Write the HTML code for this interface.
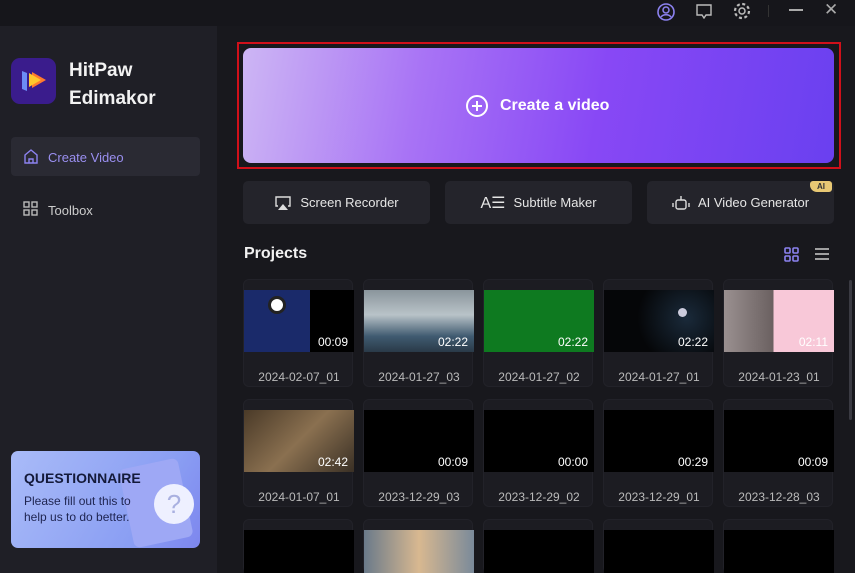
<!DOCTYPE html>
<html style="width:855px;height:573px;overflow:hidden"><head><style>
*{margin:0;padding:0;box-sizing:border-box}
body{width:855px;height:573px;overflow:hidden;background:#18181d;font-family:"Liberation Sans",sans-serif;position:relative;color:#ddd}
.abs{position:absolute}
.top{left:0;top:0;width:855px;height:26px;background:#16161b}
.side{left:0;top:26px;width:217px;height:547px;background:#1f1f26}
.tool{top:181px;height:43px;width:187px;background:#24242b;border-radius:5px;font-size:13px;color:#e6e6e6;display:flex;align-items:center;justify-content:center;gap:8px}
.card{width:110px;height:108px;background:#1c1c22;border-radius:6px;border:1px solid #222229}
.thumb{position:absolute;left:0;top:10px;width:110px;height:62px;background:#000;overflow:hidden}
.dur{position:absolute;right:6px;bottom:3px;font-size:12px;color:#fff}
.lab{position:absolute;left:0;width:110px;top:90px;text-align:center;font-size:12px;color:#bbb}
</style></head><body>
<div class="abs top"></div>
<svg class="abs" style="left:656px;top:2px" width="20" height="20" viewBox="0 0 20 20"><circle cx="10" cy="10" r="8" fill="none" stroke="#8c82f0" stroke-width="1.6"/><circle cx="10" cy="8" r="3" fill="none" stroke="#8c82f0" stroke-width="1.5"/><path d="M5 15c2-3 8-3 10 0" fill="none" stroke="#8c82f0" stroke-width="1.5"/></svg>
<svg class="abs" style="left:695px;top:3px" width="18" height="16" viewBox="0 0 18 16"><path d="M2 2h14v10h-5l-2 3-2-3H2z" fill="none" stroke="#bbb" stroke-width="1.4"/></svg>
<svg class="abs" style="left:732px;top:1px" width="20" height="20" viewBox="0 0 20 20"><circle cx="10" cy="10" r="3" fill="none" stroke="#bbb" stroke-width="1.5"/><circle cx="10" cy="10" r="7" fill="none" stroke="#bbb" stroke-width="2.2" stroke-dasharray="3 2.5"/></svg>
<div class="abs" style="left:768px;top:5px;width:1px;height:12px;background:#333"></div>
<div class="abs" style="left:789px;top:9px;width:14px;height:1.5px;background:#aaa"></div>
<div class="abs" style="left:824px;top:0;font-size:17px;color:#aaa">✕</div>

<div class="abs side"></div>
<div class="abs" style="left:11px;top:58px;width:45px;height:46px;border-radius:9px;background:#3a1c8c"></div>
<svg class="abs" style="left:20px;top:68px" width="28" height="26" viewBox="0 0 28 26"><path d="M2 3l5 2v18l-5-2z" fill="#6c8cf5"/><path d="M12 4l14 8-14 8z" fill="#ff7a2e"/><path d="M9 5l12 7-12 7z" fill="#ffc82e"/></svg>
<div class="abs" style="left:69px;top:57px;font-size:19px;font-weight:bold;color:#f2f2f2;line-height:28px">HitPaw<br>Edimakor</div>
<div class="abs" style="left:11px;top:137px;width:189px;height:39px;background:#2a2a33;border-radius:4px"></div>
<svg class="abs" style="left:23px;top:148px" width="16" height="16" viewBox="0 0 16 16"><path d="M2 7l6-5 6 5v8H2z M6 15v-4h4v4" fill="none" stroke="#8c82f0" stroke-width="1.4"/></svg>
<div class="abs" style="left:48px;top:150px;font-size:13px;color:#9a8ff0">Create Video</div>
<svg class="abs" style="left:23px;top:201px" width="15" height="15" viewBox="0 0 15 15"><g fill="none" stroke="#bbb" stroke-width="1.4"><rect x="1" y="1" width="5" height="5"/><rect x="9" y="1" width="5" height="5"/><rect x="1" y="9" width="5" height="5"/><rect x="9" y="9" width="5" height="5"/></g></svg>
<div class="abs" style="left:48px;top:203px;font-size:13px;color:#ccc">Toolbox</div>
<div class="abs" style="left:11px;top:451px;width:189px;height:97px;border-radius:7px;background:linear-gradient(120deg,#a9bbf8,#8a9ef3 70%,#7d86ee);overflow:hidden">
<div class="abs" style="left:115px;top:12px;width:60px;height:80px;border-radius:6px;background:#9ea8f5;transform:rotate(-12deg)"></div>
<div class="abs" style="left:143px;top:33px;width:40px;height:40px;border-radius:50%;background:#eef0ff;color:#a9b0e0;font-size:26px;text-align:center;line-height:40px">?</div>
<div class="abs" style="left:13px;top:19px;font-size:14px;font-weight:bold;color:#141a3a">QUESTIONNAIRE</div>
<div class="abs" style="left:13px;top:42px;font-size:12px;color:#1e2450;line-height:16px">Please fill out this to<br>help us to do better.</div>
</div>

<div class="abs" style="left:237px;top:42px;width:604px;height:127px;border:2px solid #d0101a"></div>
<div class="abs" style="left:243px;top:48px;width:591px;height:115px;border-radius:8px;background:linear-gradient(100deg,#cdb6f4 0%,#a873f5 30%,#8848f5 60%,#6a40f0 100%)"></div>
<svg class="abs" style="left:465px;top:94px" width="24" height="24" viewBox="0 0 24 24"><circle cx="12" cy="12" r="10" fill="none" stroke="#fff" stroke-width="2"/><path d="M12 7v10M7 12h10" stroke="#fff" stroke-width="2"/></svg>
<div class="abs" style="left:500px;top:97px;font-size:16px;font-weight:bold;color:#fff">Create a video</div>

<div class="abs tool" style="left:243px"><svg width="18" height="16" viewBox="0 0 18 16"><path d="M4 11H2V2h14v9h-2" fill="none" stroke="#ddd" stroke-width="1.4"/><path d="M4 15l5-6 5 6z" fill="#ddd"/></svg>Screen Recorder</div>
<div class="abs tool" style="left:445px"><span style="font-size:16px">A☰</span>Subtitle Maker</div>
<div class="abs tool" style="left:647px"><svg width="18" height="18" viewBox="0 0 18 18"><rect x="4" y="6" width="10" height="9" rx="2" fill="none" stroke="#ddd" stroke-width="1.4"/><path d="M9 2v4M1 9v4M17 9v4" stroke="#ddd" stroke-width="1.4"/></svg>AI Video Generator</div>
<div class="abs" style="left:810px;top:181px;width:22px;height:11px;background:#e8c874;border-radius:3px 3px 3px 7px;font-size:8px;color:#333;text-align:center;line-height:11px;font-weight:bold">AI</div>

<div class="abs" style="left:244px;top:245px;font-size:16px;font-weight:bold;color:#f2f2f2">Projects</div>
<svg class="abs" style="left:784px;top:247px" width="15" height="15" viewBox="0 0 15 15"><g fill="none" stroke="#8c82f0" stroke-width="1.6"><rect x="1" y="1" width="5" height="5" rx="1"/><rect x="9" y="1" width="5" height="5" rx="1"/><rect x="1" y="9" width="5" height="5" rx="1"/><rect x="9" y="9" width="5" height="5" rx="1"/></g></svg>
<svg class="abs" style="left:815px;top:248px" width="14" height="12" viewBox="0 0 14 12"><path d="M0 1h14M0 6h14M0 11h14" stroke="#ccc" stroke-width="1.5"/></svg>
<div class="abs" style="left:849px;top:280px;width:3px;height:140px;background:#3a3a42;border-radius:2px"></div>

<div class="abs card" style="left:243px;top:279px"><div class="thumb" style="background:linear-gradient(90deg,#1a2a6a 0,#1a2a6a 60%,#000 60%)"><div class="abs" style="left:24px;top:6px;width:18px;height:18px;border-radius:50%;background:#fff;border:3px solid #222"></div><span class="dur">00:09</span></div><div class="lab">2024-02-07_01</div></div>
<div class="abs card" style="left:363px;top:279px"><div class="thumb" style="background:linear-gradient(180deg,#8a959c,#b9c3c8 40%,#3f5a70 75%,#2a3a48)"><span class="dur">02:22</span></div><div class="lab">2024-01-27_03</div></div>
<div class="abs card" style="left:483px;top:279px"><div class="thumb" style="background:#0e7a20"><span class="dur">02:22</span></div><div class="lab">2024-01-27_02</div></div>
<div class="abs card" style="left:603px;top:279px"><div class="thumb" style="background:radial-gradient(circle at 75% 45%,#1a2a3a,#050608 55%)"><div class="abs" style="left:74px;top:18px;width:9px;height:9px;border-radius:50%;background:#ccd"></div><span class="dur">02:22</span></div><div class="lab">2024-01-27_01</div></div>
<div class="abs card" style="left:723px;top:279px"><div class="thumb" style="background:linear-gradient(90deg,#9a9090 0,#6a6060 45%,#f8c8d8 45%)"><span class="dur">02:11</span></div><div class="lab">2024-01-23_01</div></div>

<div class="abs card" style="left:243px;top:399px"><div class="thumb" style="background:linear-gradient(135deg,#4a3a28,#8a7050 50%,#3a3025)"><span class="dur">02:42</span></div><div class="lab">2024-01-07_01</div></div>
<div class="abs card" style="left:363px;top:399px"><div class="thumb"><span class="dur">00:09</span></div><div class="lab">2023-12-29_03</div></div>
<div class="abs card" style="left:483px;top:399px"><div class="thumb"><span class="dur">00:00</span></div><div class="lab">2023-12-29_02</div></div>
<div class="abs card" style="left:603px;top:399px"><div class="thumb"><span class="dur">00:29</span></div><div class="lab">2023-12-29_01</div></div>
<div class="abs card" style="left:723px;top:399px"><div class="thumb"><span class="dur">00:09</span></div><div class="lab">2023-12-28_03</div></div>

<div class="abs card" style="left:243px;top:519px;height:54px"><div class="thumb"></div></div>
<div class="abs card" style="left:363px;top:519px;height:54px"><div class="thumb" style="background:linear-gradient(90deg,#6a7a8a,#d8b890 50%,#7a8a9a)"></div></div>
<div class="abs card" style="left:483px;top:519px;height:54px"><div class="thumb"></div></div>
<div class="abs card" style="left:603px;top:519px;height:54px"><div class="thumb"></div></div>
<div class="abs card" style="left:723px;top:519px;height:54px"><div class="thumb"></div></div>
</body></html>
